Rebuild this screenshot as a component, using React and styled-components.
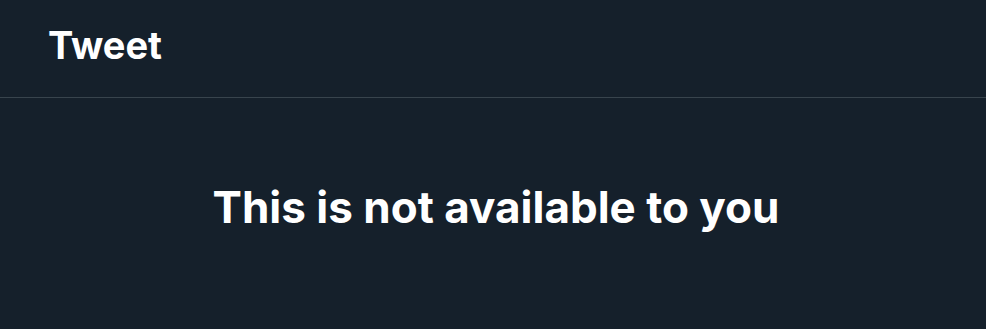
import styled, { createGlobalStyle } from "styled-components";

const GlobalStyle = createGlobalStyle`
  body {
    margin: 0;
    background: #15202b;
    font-family: Inter, "Liberation Sans", sans-serif;
  }
`;

const Page = styled.div`
  width: 986px;
  height: 329px;
  background: #15202b;
  color: #ffffff;
`;

const Header = styled.header`
  height: 98px;
  box-sizing: border-box;
  padding: 0 48px;
  display: flex;
  align-items: center;
  border-bottom: 1px solid #38444d;
`;

const Title = styled.h2`
  margin: 0;
  font-size: 38px;
  font-weight: 700;
  position: relative;
  top: -4px;
`;

const Body = styled.div`
  display: flex;
  justify-content: center;
  padding: 82px 0 0 6px;
`;

const Message = styled.p`
  margin: 0;
  font-size: 44px;
  font-weight: 700;
`;

const App = () => {
  return (
    <Page>
      <GlobalStyle />
      <Header>
        <Title>Tweet</Title>
      </Header>
      <Body>
        <Message>This is not available to you</Message>
      </Body>
    </Page>
  );
};

export default App;
